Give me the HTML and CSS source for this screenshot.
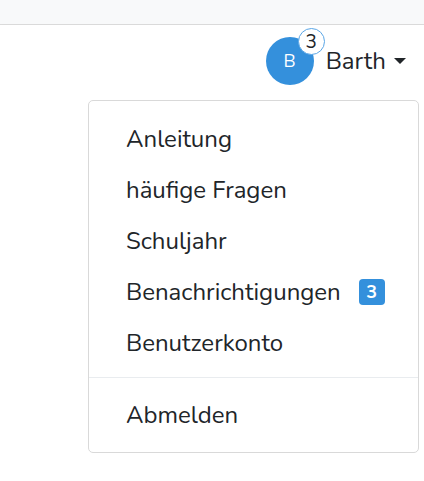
FILE: index.html
```
<!DOCTYPE html>
<html lang="de">
<head>
<meta charset="utf-8">
<link rel="stylesheet" href="styles.css">
</head>
<body>
<div class="topbar"></div>
<nav class="navbar">
  <div class="user">
    <div class="avatar">B<span class="avatar-badge">3</span></div>
    <span class="name">Barth</span>
    <span class="caret"></span>
  </div>
</nav>
<div class="menu">
  <a class="item">Anleitung</a>
  <a class="item">häufige Fragen</a>
  <a class="item">Schuljahr</a>
  <a class="item">Benachrichtigungen <span class="badge">3</span></a>
  <a class="item">Benutzerkonto</a>
  <div class="divider"></div>
  <a class="item">Abmelden</a>
</div>
</body>
</html>
```
FILE: styles.css
```
html, body {
  margin: 0;
  padding: 0;
  background: #fff;
  font-family: "Nunito", "Lato", "Noto Sans", sans-serif;
  color: #212529;
}
.topbar {
  height: 24px;
  background: #f8f9fa;
  border-bottom: 1px solid #dcdcdc;
}
.navbar {
  height: 72px;
  background: #fff;
  display: flex;
  align-items: center;
  justify-content: flex-end;
  padding-right: 18px;
  box-shadow: 0 2px 4px rgba(0, 0, 0, 0.075);
}
.user {
  display: flex;
  align-items: center;
}
.avatar {
  position: relative;
  width: 48px;
  height: 48px;
  border-radius: 50%;
  background: #3490dc;
  color: #fff;
  font-size: 18px;
  display: flex;
  align-items: center;
  justify-content: center;
}
.avatar-badge {
  position: absolute;
  top: -9px;
  right: -11px;
  width: 25px;
  height: 25px;
  border-radius: 50%;
  background: #fff;
  border: 1px solid #5aa6e6;
  color: #212529;
  font-size: 19px;
  display: flex;
  align-items: center;
  justify-content: center;
}
.name {
  font-size: 24px;
  margin-left: 12px;
}
.caret {
  width: 0;
  height: 0;
  border-left: 6px solid transparent;
  border-right: 6px solid transparent;
  border-top: 6px solid #212529;
  margin-left: 8px;
  margin-top: -1px;
}
.menu {
  position: absolute;
  top: 100px;
  left: 88px;
  width: 329px;
  padding: 12px 0;
  border: 1px solid #d9d9d9;
  border-radius: 5px;
  background: #fff;
}
.item {
  display: flex;
  align-items: center;
  height: 51px;
  padding-left: 37px;
  font-size: 24px;
  color: #212529;
}
.badge {
  margin-left: 18px;
  width: 26px;
  height: 26px;
  border-radius: 4px;
  background: #3490dc;
  color: #fff;
  font-size: 18px;
  font-weight: 700;
  display: inline-flex;
  align-items: center;
  justify-content: center;
}
.divider {
  height: 1px;
  background: #e9ecef;
  margin: 9px 0 11px;
}
```
